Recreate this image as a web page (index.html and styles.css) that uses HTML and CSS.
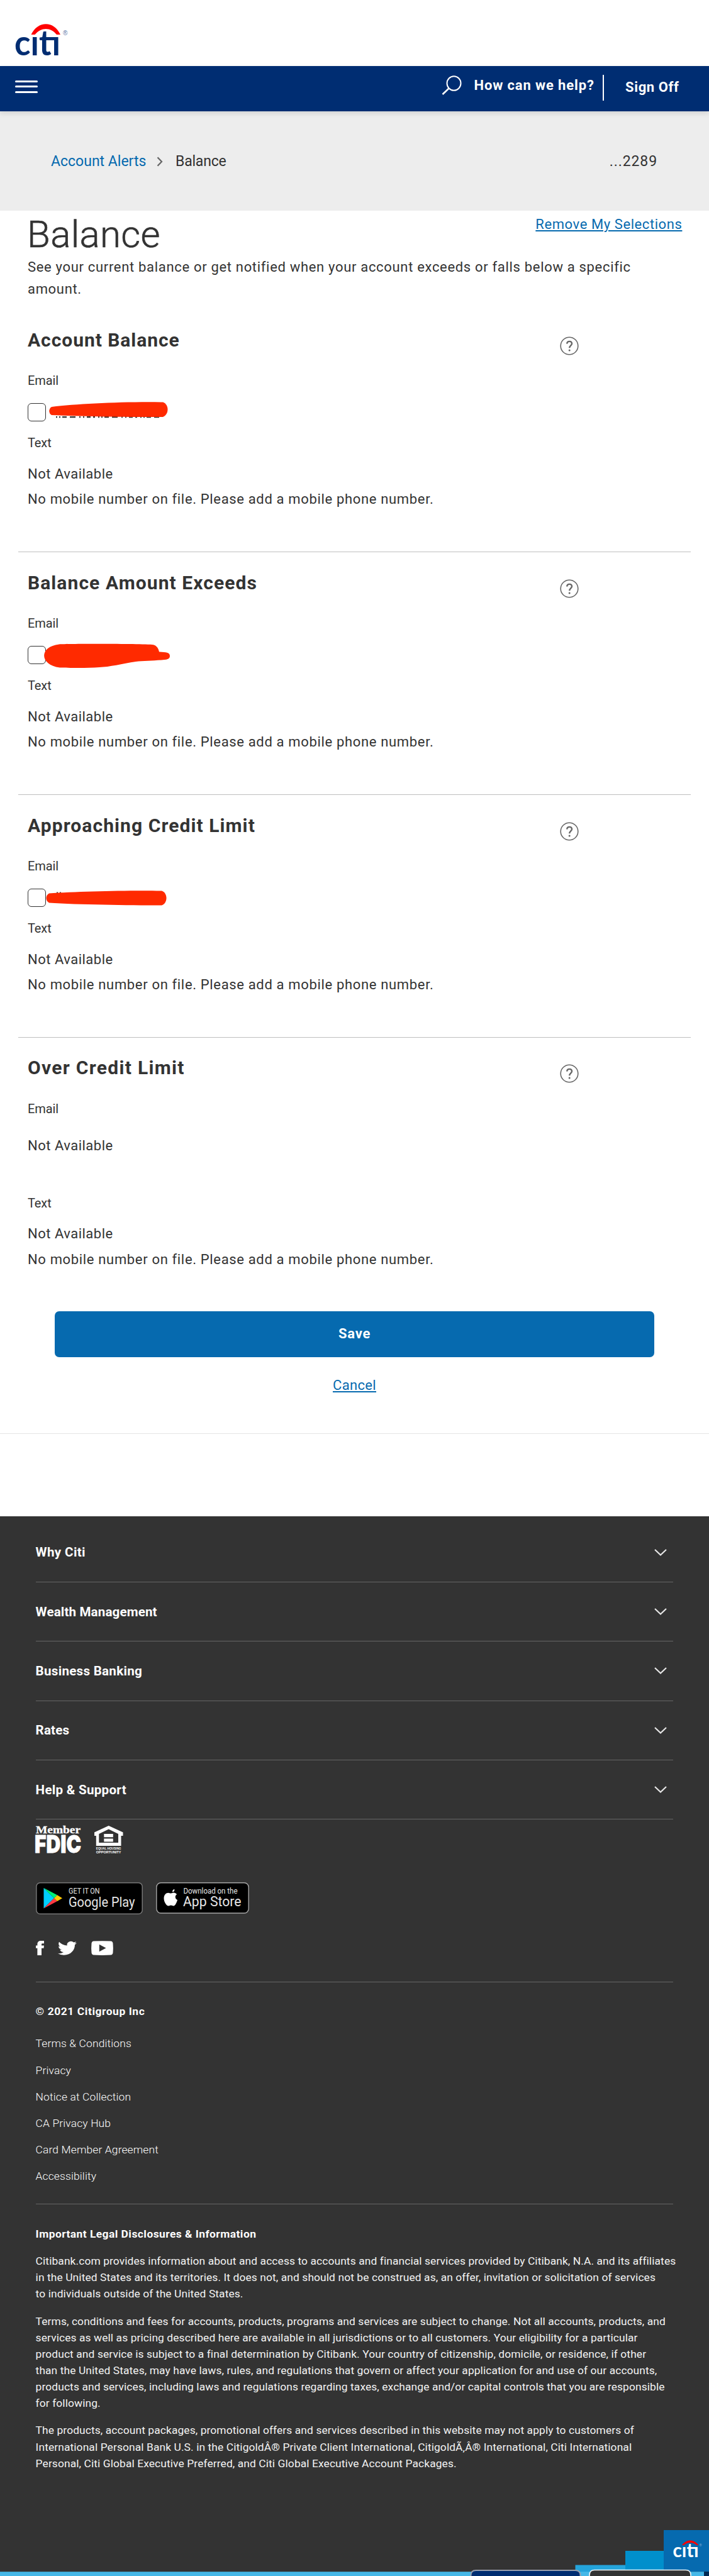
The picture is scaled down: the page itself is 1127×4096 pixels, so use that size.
FILE: index.html
```html
<!DOCTYPE html>
<html lang="en">
<head>
<meta charset="utf-8">
<title>Balance - Account Alerts</title>
<link rel="stylesheet" href="styles.css">
</head>
<body>
<svg class="defs" width="0" height="0">
  <symbol id="help" viewBox="0 0 30 30">
    <circle cx="15" cy="15" r="13.8" fill="none" stroke="#666" stroke-width="1.6"/>
    <path d="M11.2 11.600C11.300 9.300 12.900 7.900 15.100 7.900C17.400 7.900 19 9.300 19 11.400C19 14.200 15.200 14.500 15.200 18.200" fill="none" stroke="#666" stroke-width="2.400"/>
    <circle cx="15.200" cy="21.900" r="1.500" fill="#666"/>
  </symbol>
  <symbol id="chev" viewBox="0 0 20 11">
    <path d="M1 1L10 9.500L19 1" fill="none" stroke="#e6e6e6" stroke-width="2.200"/>
  </symbol>
</svg>

<header class="brand">
  <svg width="90" height="54" viewBox="0 0 90 54">
    <path d="M25.500 18C36 -4.500 62 -4.500 72 18L66 18C56.500 6 41.500 6 31.500 18Z" fill="#f00"/>
    <text class="wordmark" x="-1" y="50.500" font-size="56" textLength="73" lengthAdjust="spacingAndGlyphs" fill="#002d72">cıtı</text>
    <text class="reg" x="76" y="19" font-size="10" fill="#5b78a8">®</text>
  </svg>
</header>
<nav class="nav">
  <span class="burger"><i></i><i></i><i></i></span>
  <svg class="search" width="32" height="31" viewBox="0 0 32 31">
    <ellipse cx="19.500" cy="12.500" rx="11" ry="11.300" fill="none" stroke="#fff" stroke-width="2"/>
    <path d="M11.500 20.500L1.500 30" stroke="#fff" stroke-width="2.600"/>
  </svg>
  <b class="ask">How can we help?</b>
  <i class="bar"></i>
  <b class="off">Sign Off</b>
</nav>
<div class="crumbs">
  <a class="crumb-link">Account Alerts</a>
  <svg width="10" height="16" viewBox="0 0 10 16"><path d="M1.500 1.200L8 8L1.500 14.800" fill="none" stroke="#666" stroke-width="2.200"/></svg>
  <span class="crumb-here">Balance</span>
  <span class="acct">...2289</span>
</div>

<main>
  <div class="top">
    <h1>Balance</h1>
    <a class="remove">Remove My Selections</a>
  </div>
  <p class="intro">See your current balance or get notified when your account exceeds or falls below a specific<br>amount.</p>

  <section class="alert first">
    <div class="head"><h2>Account Balance</h2><svg class="help"><use href="#help"/></svg></div>
    <p class="label">Email</p>
    <div class="pick"><span class="box"></span>
      <svg class="mark" width="240" height="44" viewBox="0 0 240 44">
        <path d="M45 25.200H209" stroke="#333" stroke-width="2.200" stroke-dasharray="2 3 2 3 7 5 9 6 2 4 2 4 6 4 3 5"/>
        <path d="M38 9C80 4 150 .5 215 1.500C225 5 225 21 215 25C160 25.500 90 24 38 22C33 19 33 12 38 9Z" fill="#ff2a00"/>
      </svg>
    </div>
    <p class="label after">Text</p>
    <p class="state">Not Available</p>
    <p class="note">No mobile number on file. Please add a mobile phone number.</p>
  </section>

  <section class="alert">
    <div class="head"><h2 class="h-exceeds">Balance Amount Exceeds</h2><svg class="help"><use href="#help"/></svg></div>
    <p class="label">Email</p>
    <div class="pick"><span class="box"></span>
      <svg class="mark" width="240" height="44" viewBox="0 0 240 44">
        <path d="M50 .5C65 -.5 170 -.5 198 1C206 2 208 8 209 12.500C219 13 226 13 226 19C226 23 223 24 220 24.800C205 26.500 185 26.500 172 28C150 31.500 130 36.500 114 37C95 38.500 65 38 51 37.500C18 33 18 4 50 .5Z" fill="#ff2a00"/>
      </svg>
    </div>
    <p class="label after">Text</p>
    <p class="state">Not Available</p>
    <p class="note">No mobile number on file. Please add a mobile phone number.</p>
  </section>

  <section class="alert">
    <div class="head"><h2 class="h-approach">Approaching Credit Limit</h2><svg class="help"><use href="#help"/></svg></div>
    <p class="label">Email</p>
    <div class="pick"><span class="box"></span>
      <svg class="mark" width="240" height="44" viewBox="0 0 240 44">
        <path d="M46 9.500H48M51 9.500H53" stroke="#333" stroke-width="2"/>
        <path d="M34 10.500C80 7.500 160 5.500 213 6.500C223 10 223 26 213 29.500C160 29.500 80 28.500 34 25.500C28 22 28 14 34 10.500Z" fill="#ff2a00"/>
      </svg>
    </div>
    <p class="label after">Text</p>
    <p class="state">Not Available</p>
    <p class="note">No mobile number on file. Please add a mobile phone number.</p>
  </section>

  <section class="alert last">
    <div class="head"><h2 class="h-over">Over Credit Limit</h2><svg class="help"><use href="#help"/></svg></div>
    <p class="label">Email</p>
    <p class="state none">Not Available</p>
    <p class="label late">Text</p>
    <p class="state">Not Available</p>
    <p class="note">No mobile number on file. Please add a mobile phone number.</p>
  </section>

  <div class="actions">
    <button class="save">Save</button>
    <a class="cancel">Cancel</a>
  </div>
</main>

<footer>
  <div class="row"><b class="r1">Why Citi</b><svg class="chev"><use href="#chev"/></svg></div>
  <div class="row"><b class="r2">Wealth Management</b><svg class="chev"><use href="#chev"/></svg></div>
  <div class="row"><b>Business Banking</b><svg class="chev"><use href="#chev"/></svg></div>
  <div class="row"><b class="r2">Rates</b><svg class="chev"><use href="#chev"/></svg></div>
  <div class="row"><b>Help &amp; Support</b><svg class="chev"><use href="#chev"/></svg></div>

  <div class="seals">
    <svg width="71" height="44" viewBox="0 0 71 44">
      <text class="member" x="0" y="12" font-size="17.500" textLength="71" lengthAdjust="spacingAndGlyphs">Member</text>
      <text class="fdic" x="-2" y="43" font-size="38" textLength="74" lengthAdjust="spacingAndGlyphs">FDIC</text>
    </svg>
    <svg width="46" height="44" viewBox="0 0 46 44">
      <path d="M22.700 0L45.500 10.500V16H42.500V32H2.800V16H0V10.500ZM22.700 5.500L7.300 13V27H38V13Z" fill="#fff" fill-rule="evenodd"/>
      <path d="M15.300 13H29.800V18.200H15.300ZM15.300 20.400H29.800V25.500H15.300Z" fill="#fff"/>
      <text class="eho" x="2.800" y="38" textLength="39.700" lengthAdjust="spacingAndGlyphs">EQUAL HOUSING</text>
      <text class="eho" x="2.800" y="43.500" textLength="39.700" lengthAdjust="spacingAndGlyphs">OPPORTUNITY</text>
    </svg>
  </div>

  <div class="stores">
    <svg width="170" height="51" viewBox="0 0 170 51">
      <rect x=".8" y=".8" width="168.400" height="49.400" rx="6" fill="#000" stroke="#777" stroke-width="1.500"/>
      <path d="M12.500 9V41.500L29 25.200Z" fill="#00d0ff"/>
      <path d="M12.500 9L34 20.300L29 25.200Z" fill="#00f076"/>
      <path d="M12.500 41.500L34 30L29 25.200Z" fill="#ff3a44"/>
      <path d="M34 20.300L42 25.200L34 30L29 25.200Z" fill="#ffc900"/>
      <text class="st" x="52" y="17.500" font-size="12" textLength="49.500" lengthAdjust="spacingAndGlyphs">GET IT ON</text>
      <text class="st" x="52" y="38.500" font-size="22.500" textLength="105.500" lengthAdjust="spacingAndGlyphs">Google Play</text>
    </svg>
    <svg width="148" height="51" viewBox="0 0 148 51">
      <rect x=".8" y=".8" width="146.400" height="48.200" rx="7" fill="#000" stroke="#a6a6a6" stroke-width="1.400"/>
      <path d="M26.500 15.500C25.500 13.500 27 11.400 29.400 11C29.600 13.500 28.400 15.300 26.500 15.500ZM23.800 17.500C25.300 17.500 26 16.600 28 16.600C30 16.600 32 17.500 33 19.200C29.500 21.300 30.200 26.500 34 28C33 31.500 30.700 37.500 27.800 37.500C26.300 37.500 25.600 36.600 23.800 36.600C22 36.600 21.300 37.500 19.900 37.500C16.500 37.500 12.500 31 12.500 25.500C12.500 20 16 16.700 19.500 16.700C21.300 16.700 22.500 17.500 23.800 17.500Z" fill="#fff"/>
      <text class="st" x="43.500" y="18.200" font-size="12" textLength="86" lengthAdjust="spacingAndGlyphs">Download on the</text>
      <text class="st" x="43" y="37.500" font-size="22" textLength="92.500" lengthAdjust="spacingAndGlyphs">App Store</text>
    </svg>
  </div>

  <div class="social">
    <svg width="13" height="23" viewBox="0 0 13 23"><path d="M13 0V4.200H10.500C9.300 4.200 9 4.800 9 6V7.500H13L12.500 11.800H9V23H2.400V11.800H0V7.500H2.400V5.500C2.400 1.800 4.500 0 8.300 0Z" fill="#fff"/></svg>
    <svg width="30" height="23" viewBox="0 1.500 24 20.500" preserveAspectRatio="none"><path d="M23.950 4.570a10 10 0 0 1-2.820.77 4.960 4.960 0 0 0 2.160-2.720c-.95.550-2 .95-3.130 1.190a4.920 4.920 0 0 0-8.380 4.480C7.690 8.100 4.070 6.130 1.640 3.160a4.820 4.820 0 0 0-.67 2.480c0 1.710.87 3.210 2.190 4.100a4.900 4.900 0 0 1-2.230-.62v.06a4.920 4.920 0 0 0 3.950 4.830 5 5 0 0 1-2.210.08 4.940 4.940 0 0 0 4.600 3.420A9.870 9.870 0 0 1 0 19.540a13.990 13.990 0 0 0 7.550 2.210c9.050 0 14-7.500 14-13.980 0-.21 0-.42-.02-.63a9.940 9.940 0 0 0 2.460-2.550z" fill="#fff"/></svg>
    <svg width="35" height="23" viewBox="0 0 35 23"><path d="M4 .6Q17.500 -.2 31 .6Q34 1 34.500 4Q35.200 11.500 34.500 19Q34 22.200 31 22.500Q17.500 23.400 4 22.500Q1 22.200 .5 19Q-.2 11.500 .5 4Q1 1 4 .6ZM12.800 5.800V17.200L23.500 11.500Z" fill="#fff" fill-rule="evenodd"/></svg>
  </div>

  <div class="corp">
    <b class="copy">© 2021 Citigroup Inc</b>
    <a>Terms &amp; Conditions</a>
    <a>Privacy</a>
    <a>Notice at Collection</a>
    <a>CA Privacy Hub</a>
    <a>Card Member Agreement</a>
    <a>Accessibility</a>
  </div>

  <div class="legal">
    <b>Important Legal Disclosures &amp; Information</b>
    <p>Citibank.com provides information about and access to accounts and financial services provided by Citibank, N.A. and its affiliates<br>in the United States and its territories. It does not, and should not be construed as, an offer, invitation or solicitation of services<br>to individuals outside of the United States.</p>
    <p>Terms, conditions and fees for accounts, products, programs and services are subject to change. Not all accounts, products, and<br>services as well as pricing described here are available in all jurisdictions or to all customers. Your eligibility for a particular<br>product and service is subject to a final determination by Citibank. Your country of citizenship, domicile, or residence, if other<br>than the United States, may have laws, rules, and regulations that govern or affect your application for and use of our accounts,<br>products and services, including laws and regulations regarding taxes, exchange and/or capital controls that you are responsible<br>for following.</p>
    <p>The products, account packages, promotional offers and services described in this website may not apply to customers of<br>International Personal Bank U.S. in the CitigoldÂ® Private Client International, CitigoldÃ‚Â® International, Citi International<br>Personal, Citi Global Executive Preferred, and Citi Global Executive Account Packages.</p>
  </div>

  <svg class="skyline" width="1127" height="73" viewBox="0 0 1127 73">
    <rect x="994" y="33" width="61.500" height="40" fill="#008fcc"/>
    <rect x="914.500" y="55.500" width="79.500" height="18" fill="#24a4db"/>
    <rect x="0" y="66.200" width="1119" height="7" fill="#45b8e8"/>
    <rect x="1119" y="66.200" width="8" height="7" fill="#002a54"/>
    <rect x="1055" y="0" width="72" height="66" fill="#066aaf"/>
    <path d="M748.500 73V72Q748.500 64 756.500 64H914.500Q922.500 64 922.500 72V73" fill="#002d72" stroke="#999fae" stroke-width="2"/>
    <path d="M937 73V71.500Q937 63.500 945 63.500H1090Q1098 63.500 1098 71.500V73" fill="#333" stroke="#f2f6f8" stroke-width="1.600"/>
    <path d="M1084 24C1091 14 1103 14 1110.500 24L1107.500 24C1101 18.500 1093 18.500 1087 24Z" fill="#f00"/>
    <text class="wordmark" x="1069.500" y="42.500" font-size="31" textLength="41" lengthAdjust="spacingAndGlyphs" fill="#fff">cıtı</text>
    <text class="reg" x="1111.500" y="25.500" font-size="5.500" fill="#8fb8dc">®</text>
  </svg>
</footer>
</body>
</html>
```
FILE: styles.css
```css
* { box-sizing: border-box; }
body {
  margin: 0;
  width: 1127px;
  height: 4096px;
  overflow: hidden;
  background: #fff;
  color: #333;
  font: 22px/30px Roboto, "Liberation Sans", sans-serif;
}
svg { display: block; flex: none; overflow: visible; }
.defs { position: absolute; }
h1, h2, p { margin: 0; }

.brand { height: 104.5px; padding: 36.5px 0 0 24px; }
.wordmark { font-family: Lato, sans-serif; font-weight: 700; }
.reg { font-family: "Liberation Sans", sans-serif; }

.nav {
  position: relative;
  display: flex;
  align-items: flex-start;
  height: 72.5px;
  padding: 14.5px 0 0 24px;
  background: #002d72;
  color: #fff;
  box-shadow: 0 3px 8px rgba(0, 0, 0, .12);
}
.burger { display: grid; gap: 5.6px; width: 36px; margin-top: 8.5px; }
.burger i { height: 3px; border-radius: 1.5px; background: #fff; }
.search { margin: 1px 0 0 641.5px; }
.ask { width: 191px; margin: 2px 0 0 20px; letter-spacing: .86px; white-space: nowrap; }
.bar { width: 1.6px; height: 41px; margin-left: 13.5px; background: #fff; }
.off { margin: 5px 0 0 34.5px; letter-spacing: .6px; }

.crumbs {
  display: flex;
  align-items: center;
  height: 158px;
  padding: 1.5px 82px 0 81px;
  background: #ededed;
  font-size: 23px;
}
.crumb-link { width: 168px; color: #066aaf; }
.crumb-here { margin-left: 20px; letter-spacing: -.2px; }
.acct { margin-left: auto; letter-spacing: .9px; }

main { height: 1945.2px; padding: 4.2px 28.6px 0; border-bottom: 1.5px solid #e5e5e5; }
.top { display: flex; justify-content: space-between; padding: 0 14px 0 14.5px; }
h1 { font-size: 60px; line-height: 68px; font-weight: 300; letter-spacing: .3px; -webkit-text-stroke: .6px #333; }
.remove, .cancel {
  color: #066aaf;
  text-decoration: underline;
  text-decoration-thickness: 1.5px;
  text-underline-offset: 2px;
}
.remove { margin-top: 3px; letter-spacing: .58px; }
.intro { padding-left: 15.4px; line-height: 35.3px; letter-spacing: .68px; white-space: nowrap; }

.alert { height: 385.8px; padding: 30.8px 15.4px 0; border-top: 1.5px solid #bfbfbf; }
.first { margin-top: 13.4px; border-color: transparent; }
.head { display: flex; justify-content: space-between; height: 36px; padding-right: 163.5px; }
h2 { font-size: 30px; line-height: 36px; letter-spacing: .95px; }
.h-exceeds, .h-approach { letter-spacing: 1.08px; }
.h-over { letter-spacing: 1.3px; }
.help { width: 30px; height: 30px; margin-top: 12px; }
.label { margin-top: 33.5px; font-size: 20px; line-height: 26px; letter-spacing: -.1px; }
.pick { position: relative; height: 29.2px; margin-top: 22.5px; }
.box { display: block; width: 29px; height: 29.2px; border: 1.5px solid #333; border-radius: 6px; }
.mark { position: absolute; left: 0; top: -3px; }
.after { margin-top: 21.2px; }
.state { margin-top: 21.6px; letter-spacing: .5px; }
.note { margin-top: 10.5px; letter-spacing: .66px; }
.none { margin-top: 31.4px; }
.late { margin-top: 62.5px; }

.actions { display: grid; justify-items: center; margin-top: 50.5px; padding: 0 58.4px; }
.save {
  width: 100%;
  height: 72.7px;
  padding: 0;
  border: 0;
  border-radius: 7px;
  background: #066aaf;
  color: #fff;
  font: 700 22px/30px Roboto, sans-serif;
  letter-spacing: .75px;
}
.cancel { margin-top: 30.6px; letter-spacing: .34px; }

footer {
  position: relative;
  height: 1684.5px;
  margin-top: 131.3px;
  padding: 10px 56.6px 0;
  background: #333;
  color: #fff;
  font-size: 17.4px;
}
.row {
  display: flex;
  align-items: center;
  justify-content: space-between;
  height: 94.4px;
  padding-right: 10.5px;
  border-bottom: 1.5px solid #666;
  font-size: 20.6px;
  letter-spacing: .27px;
}
.row .r1 { letter-spacing: .36px; }
.row .r2 { letter-spacing: .13px; }
.chev { width: 20px; height: 11px; }
.seals { display: flex; gap: 22px; margin-top: 10px; fill: #fff; }
.member { font-family: "Liberation Serif", serif; font-weight: 700; stroke: #fff; stroke-width: .3; }
.fdic { font-family: Inter, "Liberation Sans", sans-serif; font-weight: 900; stroke: #fff; stroke-width: .8; }
.eho { font: 700 5.4px "Liberation Sans", sans-serif; }
.stores { display: flex; gap: 21.5px; margin-top: 46px; fill: #e6e6e6; }
.social { display: flex; gap: 22.5px; height: 65.5px; margin-top: 42px; border-bottom: 1.5px solid #666; }
.corp {
  display: flex;
  flex-direction: column;
  height: 353.5px;
  padding-top: 34.5px;
  border-bottom: 1.5px solid #666;
  line-height: 42.08px;
}
.copy { margin-bottom: 18px; line-height: 24px; letter-spacing: .57px; }
.corp a { font-weight: 300; letter-spacing: .15px; }
.legal { padding-top: 35px; line-height: 26.1px; letter-spacing: .1px; white-space: nowrap; }
.legal b { display: block; line-height: 24px; letter-spacing: .46px; }
.legal p { margin-top: 17.4px; color: #f2f2f2; }
.skyline { position: absolute; left: 0; bottom: 0; overflow: hidden; }
```
